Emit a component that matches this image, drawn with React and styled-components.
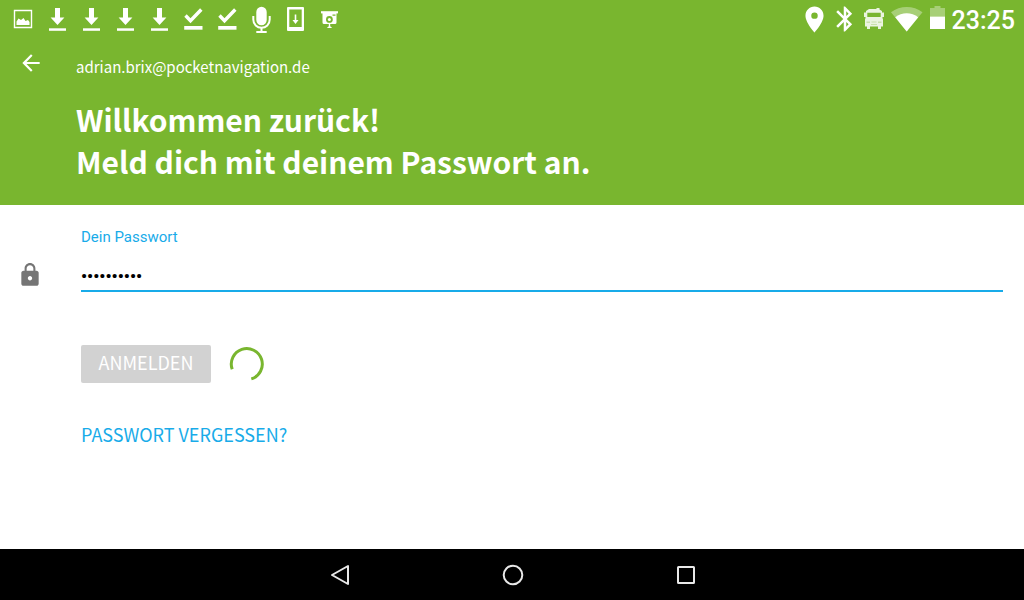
import { useState } from "react";
import {
  MdArrowBack,
  MdBluetooth,
  MdLocationOn,
  MdLock,
} from "react-icons/md";
import styled, { createGlobalStyle } from "styled-components";

const GlobalStyle = createGlobalStyle`
  * {
    box-sizing: border-box;
  }

  body {
    margin: 0;
    background: #fff;
    font-family: "Noto Sans CJK SC", "Noto Sans", sans-serif;
  }
`;

const Screen = styled.div`
  display: flex;
  flex-direction: column;
  min-height: 100vh;
`;

const Header = styled.header`
  padding-bottom: 23px;
  background: #79b62f;
  color: #fff;
`;

const StatusBar = styled.div`
  display: flex;
  justify-content: space-between;
  height: 38px;
  padding: 0 9px 0 6px;
`;

const StatusGroup = styled.div`
  display: flex;
  align-items: center;
`;

const StatusIcon = styled.svg`
  display: block;
  width: ${({ $width }) => $width || 34}px;
  height: 38px;
`;

const Clock = styled.time`
  padding: 3px 0 0 3px;
  font-family: Roboto, sans-serif;
  font-size: 25px;
  font-weight: 500;
  line-height: 30px;
`;

const Row = styled.div`
  display: grid;
  grid-template-columns: ${({ $indent }) => $indent || 76}px 1fr;
`;

const BackButton = styled.button`
  display: flex;
  align-self: start;
  width: 44px;
  margin: 12px 0 0 18px;
  padding: 0;
  border: none;
  background: none;
  color: #fff;
  font-size: 26px;
  cursor: pointer;
`;

const Email = styled.p`
  margin: 16px 0 18px;
  font-size: 15px;
  line-height: 26px;
`;

const Title = styled.h1`
  margin: 0;
  font-size: 30px;
  font-weight: 700;
  line-height: 42px;
`;

const Form = styled.form`
  flex: 1;
  padding: 22px 21px 0 0;
`;

const LockCell = styled.div`
  padding: 35px 0 0 17px;
  color: #757575;
  font-size: 26px;
  line-height: 0;
`;

const Field = styled.div`
  display: flex;
  flex-direction: column;
`;

const Label = styled.label`
  color: #18abe9;
  font-family: Roboto, sans-serif;
  font-size: 15px;
  line-height: 20px;
`;

const PasswordInput = styled.input`
  width: 100%;
  height: 45px;
  padding: 14px 0 0;
  border: none;
  border-bottom: 2px solid #18abe9;
  outline: none;
  color: #000;
  font-family: Roboto, sans-serif;
  font-size: 17px;
  font-weight: 700;
`;

const Actions = styled.div`
  display: flex;
  flex-direction: column;
  align-items: flex-start;
  gap: 36px;
  padding: 53px 0 0 81px;
`;

const SubmitRow = styled.div`
  display: flex;
  align-items: center;
  gap: 18px;
`;

const SubmitButton = styled.button`
  min-width: 130px;
  height: 38px;
  padding: 0 16px 4px;
  border: none;
  border-radius: 2px;
  background: #d2d2d2;
  color: #fff;
  font-family: inherit;
  font-size: 18px;
  line-height: 34px;
`;

const Spinner = styled.svg`
  display: block;
  width: 36px;
  height: 36px;
`;

const ForgotLink = styled.a`
  color: #18abe9;
  font-size: 18px;
  line-height: 30px;
  text-decoration: none;
`;

const NavBar = styled.nav`
  display: flex;
  justify-content: center;
  height: 51px;
  background: #000;
`;

const NavButton = styled.button`
  width: 173px;
  padding: 0;
  border: none;
  background: none;
  color: #e8e8e8;
  cursor: pointer;

  svg {
    display: block;
    width: 28px;
    height: 28px;
    margin: 0 auto;
  }
`;

function PictureIcon() {
  return (
    <StatusIcon viewBox="0 0 34 38" fill="none">
      <path d="M8.500 10.500h17v17h-17z" stroke="#fff" strokeWidth="1.400" />
      <path d="M10.500 25v-3.500l2-3 2.500 1.500 2.500-2 2 3 2.500-1 1.500 2v3z" fill="#fff" />
    </StatusIcon>
  );
}

function DownloadIcon() {
  return (
    <StatusIcon viewBox="0 0 34 38" fill="#fff">
      <path d="M15 8h5v9.500h4.400l-6.900 7.500-6.900-7.500h4.400z" />
      <path d="M9 28.300h17v2.500h-17z" />
    </StatusIcon>
  );
}

function DoneIcon() {
  return (
    <StatusIcon viewBox="0 0 34 38" fill="none">
      <path d="M9.500 15.500l5 5.200L25.300 9.500" stroke="#fff" strokeWidth="3.400" />
      <path d="M8.200 26h18.300v3.700H8.200z" fill="#fff" />
    </StatusIcon>
  );
}

function MicIcon() {
  return (
    <StatusIcon viewBox="0 0 34 38" fill="none" stroke="#fff">
      <rect x="12.300" y="6.800" width="10.400" height="18.400" rx="5.200" fill="#fff" stroke="none" />
      <path d="M9.300 16v3.500c0 5 3.700 8.300 8.200 8.300s8.200-3.300 8.200-8.300V16" strokeWidth="2" />
      <path d="M17.500 28v4M12.300 32h10.400" strokeWidth="2" />
    </StatusIcon>
  );
}

function DeviceIcon() {
  return (
    <StatusIcon viewBox="0 0 34 38" fill="#fff">
      <path
        fillRule="evenodd"
        d="M10 7h15a1 1 0 0 1 1 1v22a1 1 0 0 1-1 1H10a1 1 0 0 1-1-1V8a1 1 0 0 1 1-1zm1.300 2.500v17.500h12.400V9.500z"
      />
      <path d="M16.700 14.500h1.600v5.500h2.200l-3 4-3-4h2.200z" />
    </StatusIcon>
  );
}

function ProjectorIcon() {
  return (
    <StatusIcon viewBox="0 0 34 38" fill="#fff">
      <path d="M9 11.200h17v2.200H9z" />
      <path
        fillRule="evenodd"
        d="M10.500 13h14v9.500a1.500 1.500 0 0 1-1.500 1.500H12a1.500 1.500 0 0 1-1.500-1.500zM20.500 14.500v1.200h3v-1.200zM17.400 16a3.400 3.400 0 1 0 0 6.800 3.400 3.400 0 0 0 0-6.800z"
      />
      <circle cx="17.400" cy="19.400" r="1.500" />
      <path d="M16.800 24h1.400v2.300l2 1.700h-5.400l2-1.700z" />
    </StatusIcon>
  );
}

function BusIcon() {
  return (
    <StatusIcon $width={28} viewBox="0 0 28 38" fill="#fff">
      <path
        fillOpacity="0.85"
        fillRule="evenodd"
        d="M9 9h7.500v-1h3v1.500l2.500 1.500v1.500h2V17h-1.500v1l.5 1.500v7h-2V29h-3v-2.500H10V29H7v-2.500H5v-7l.5-1.500v-1H4v-4.500h2V11zM7.300 12.800v4.200h13.400v-4.200z"
      />
      <g fill="#79b62f" fillOpacity="0.3">
        <path d="M6.500 21.500h3.500v1.500H6.500zM18 21.500h3.500v1.500H18z" />
        <path d="M11.500 21.500h5v1h-5zM11 24h6v1h-6z" />
      </g>
    </StatusIcon>
  );
}

function WifiIcon() {
  return (
    <StatusIcon $width={38} viewBox="0 0 38 38" fill="#fff">
      <path fillOpacity="0.350" d="M3 12.300C12 5.300 25.500 5.300 34.500 12.300L18.700 31.500z" />
      <path d="M7.200 17.300c6.500-5.500 16.500-5.500 23 0L18.700 31.500z" />
    </StatusIcon>
  );
}

function BatteryIcon() {
  return (
    <StatusIcon $width={23} viewBox="0 0 23 38" fill="#fff">
      <path fillOpacity="0.350" d="M8.500 6h6v2H19v8.500H4V8h4.500z" />
      <path d="M4 16.500h15V29H4z" />
    </StatusIcon>
  );
}

const notifications = [
  PictureIcon,
  DownloadIcon,
  DownloadIcon,
  DownloadIcon,
  DownloadIcon,
  DoneIcon,
  DoneIcon,
  MicIcon,
  DeviceIcon,
  ProjectorIcon,
];

function App() {
  const [password, setPassword] = useState("passwort12");

  return (
    <Screen>
      <GlobalStyle />
      <Header>
        <StatusBar>
          <StatusGroup>
            {notifications.map((Icon, index) => (
              <Icon key={index} />
            ))}
          </StatusGroup>
          <StatusGroup>
            <MdLocationOn size={31} />
            <MdBluetooth size={30} />
            <BusIcon />
            <WifiIcon />
            <BatteryIcon />
            <Clock>23:25</Clock>
          </StatusGroup>
        </StatusBar>
        <Row>
          <BackButton type="button" aria-label="Zurück">
            <MdArrowBack />
          </BackButton>
          <div>
            <Email>adrian.brix@pocketnavigation.de</Email>
            <Title>
              Willkommen zurück!
              <br />
              Meld dich mit deinem Passwort an.
            </Title>
          </div>
        </Row>
      </Header>
      <Form onSubmit={(e) => e.preventDefault()}>
        <Row $indent={81}>
          <LockCell>
            <MdLock />
          </LockCell>
          <Field>
            <Label htmlFor="password">Dein Passwort</Label>
            <PasswordInput
              id="password"
              name="password"
              onChange={(e) => setPassword(e.target.value)}
              type="password"
              value={password}
            />
          </Field>
        </Row>
        <Actions>
          <SubmitRow>
            <SubmitButton type="submit" disabled>
              ANMELDEN
            </SubmitButton>
            <Spinner viewBox="0 0 36 36" fill="none">
              <path
                d="M3.200 23.300A15.500 15.500 0 1 1 22.300 32.900"
                stroke="#79b62f"
                strokeWidth="3"
              />
            </Spinner>
          </SubmitRow>
          <ForgotLink href="#forgot">PASSWORT VERGESSEN?</ForgotLink>
        </Actions>
      </Form>
      <NavBar>
        <NavButton type="button" aria-label="Zurück">
          <svg viewBox="0 0 28 28" fill="none" stroke="currentColor" strokeWidth="2">
            <path d="M7 14L23 5v18z" strokeLinejoin="round" />
          </svg>
        </NavButton>
        <NavButton type="button" aria-label="Startseite">
          <svg viewBox="0 0 28 28" fill="none" stroke="currentColor" strokeWidth="2">
            <circle cx="15" cy="14" r="9.300" />
          </svg>
        </NavButton>
        <NavButton type="button" aria-label="Übersicht">
          <svg viewBox="0 0 28 28" fill="none" stroke="currentColor" strokeWidth="2">
            <rect x="7" y="6" width="16" height="16" rx="0.500" />
          </svg>
        </NavButton>
      </NavBar>
    </Screen>
  );
}

export default App;
